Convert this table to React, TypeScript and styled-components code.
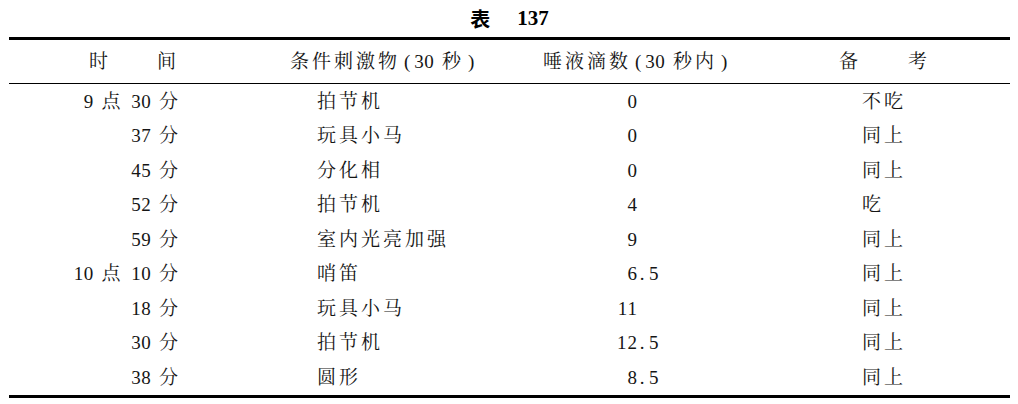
import React from "react";
import styled, { createGlobalStyle } from "styled-components";

const GlobalStyle = createGlobalStyle`
    html, body {
        margin: 0;
        padding: 0;
        background: #ffffff;
    }
    body {
        font-family: "Liberation Serif", "Noto Serif CJK SC", "Noto Sans CJK SC", serif;
        color: #151515;
    }
`;

const Page = styled.div`
    width: 1001px;
    margin-left: 9px;
`;

const Caption = styled.div`
    height: 37px;
    display: flex;
    align-items: center;
    justify-content: center;
    gap: 27px;
    font-size: 20px;
    font-weight: 700;
    color: #000;
`;

const CaptionWord = styled.span`
    font-family: "Noto Sans CJK SC", sans-serif;
    font-weight: 700;
`;

const CaptionNum = styled.span`
    font-family: "Liberation Serif", serif;
    font-weight: 700;
    font-size: 21px;
`;

const Table = styled.div`
    border-top: 3px solid #000;
    border-bottom: 3px solid #000;
`;

const columns = "250px 240px 300px 211px";

const HeaderRow = styled.div`
    display: grid;
    grid-template-columns: ${columns};
    height: 43px;
    align-items: center;
    border-bottom: 1.5px solid #000;
`;

const BodyRow = styled.div`
    display: grid;
    grid-template-columns: ${columns};
    height: 34.5px;
    align-items: center;
`;

const Cell = styled.div<{ $pad?: number; $right?: number; $align?: "left" | "right"; $spacing?: number }>`
    font-size: 19px;
    line-height: 1;
    white-space: nowrap;
    text-align: ${(p) => p.$align ?? "left"};
    padding-left: ${(p) => p.$pad ?? 0}px;
    padding-right: ${(p) => p.$right ?? 0}px;
    letter-spacing: ${(p) => p.$spacing ?? 3}px;
`;

const Latin = styled.span`
    letter-spacing: 0.5px;
`;

const Paren = styled.span`
    letter-spacing: 0;
    margin: 0 4px;
`;

const IntPart = styled.span`
    display: inline-block;
    width: 40px;
    text-align: right;
    letter-spacing: 1px;
`;

const FracPart = styled.span`
    letter-spacing: 1px;
`;

const Dot = styled.span`
    display: inline-block;
    width: 11px;
    text-align: center;
`;

type Row = { time: string; stimulus: string; drops: string; note: string };

const rows: Row[] = [
    { time: "9 点 30 分", stimulus: "拍节机", drops: "0", note: "不吃" },
    { time: "37 分", stimulus: "玩具小马", drops: "0", note: "同上" },
    { time: "45 分", stimulus: "分化相", drops: "0", note: "同上" },
    { time: "52 分", stimulus: "拍节机", drops: "4", note: "吃" },
    { time: "59 分", stimulus: "室内光亮加强", drops: "9", note: "同上" },
    { time: "10 点 10 分", stimulus: "哨笛", drops: "6.5", note: "同上" },
    { time: "18 分", stimulus: "玩具小马", drops: "11", note: "同上" },
    { time: "30 分", stimulus: "拍节机", drops: "12.5", note: "同上" },
    { time: "38 分", stimulus: "圆形", drops: "8.5", note: "同上" },
];

// digits get a tighter tracking than the CJK characters around them
function Mixed({ text }: { text: string }) {
    const parts = text.split(/(\d+|[()])/);
    return (
        <>
            {parts.map((p, i) => {
                if (/^\d+$/.test(p)) return <Latin key={i}>{p}</Latin>;
                if (p === "(" || p === ")") return <Paren key={i}>{p}</Paren>;
                return <React.Fragment key={i}>{p}</React.Fragment>;
            })}
        </>
    );
}

function Drops({ value }: { value: string }) {
    const [int, frac] = value.split(".");
    return (
        <>
            <IntPart>{int}</IntPart>
            {frac && <><Dot>.</Dot><FracPart>{frac}</FracPart></>}
        </>
    );
}

export default function App() {
    return (
        <>
            <GlobalStyle />
            <Page>
                <Caption>
                    <CaptionWord>表</CaptionWord>
                    <CaptionNum>137</CaptionNum>
                </Caption>
                <Table>
                    <HeaderRow>
                        <Cell $pad={80} $spacing={49}>时间</Cell>
                        <Cell $pad={31}><Mixed text="条件刺激物(30 秒)" /></Cell>
                        <Cell $pad={44}><Mixed text="唾液滴数(30 秒内)" /></Cell>
                        <Cell $pad={40} $spacing={50}>备考</Cell>
                    </HeaderRow>
                    {rows.map((r, i) => (
                        <BodyRow key={i}>
                            <Cell $align="right" $right={78}><Mixed text={r.time} /></Cell>
                            <Cell $pad={58}>{r.stimulus}</Cell>
                            <Cell $pad={99}><Drops value={r.drops} /></Cell>
                            <Cell $pad={63}>{r.note}</Cell>
                        </BodyRow>
                    ))}
                </Table>
            </Page>
        </>
    );
}
